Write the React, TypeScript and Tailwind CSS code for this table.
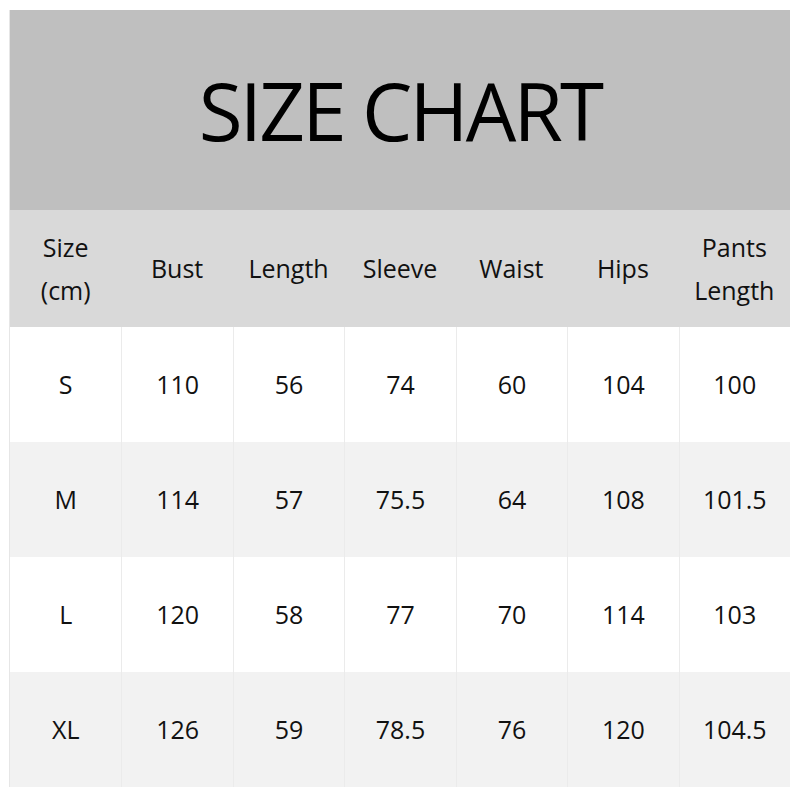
const headers = [
    ["Size", "(cm)"],
    ["Bust"],
    ["Length"],
    ["Sleeve"],
    ["Waist"],
    ["Hips"],
    ["Pants", "Length"],
]

const rows = [
    ["S", "110", "56", "74", "60", "104", "100"],
    ["M", "114", "57", "75.5", "64", "108", "101.5"],
    ["L", "120", "58", "77", "70", "114", "103"],
    ["XL", "126", "59", "78.5", "76", "120", "104.5"],
]

export default function App() {
    return (
        <div className="w-[800px] h-[800px] bg-white pt-[10px] pl-[9px] font-['Open_Sans',sans-serif] text-[#111]">
            <div className="w-[781px] border-l border-[#e6e6e6]">
                <div className="h-[200px] bg-[#bfbfbf] flex items-center justify-center">
                    <h1 className="text-[80px] leading-none tracking-[-2.8px] text-black">SIZE CHART</h1>
                </div>
                <div className="h-[117px] bg-[#d9d9d9] grid grid-cols-7">
                    {headers.map((h) => (
                        <div key={h.join(" ")} className="flex flex-col items-center justify-center text-[25px] leading-[43px]">
                            {h.map((line) => (
                                <span key={line}>{line}</span>
                            ))}
                        </div>
                    ))}
                </div>
                {rows.map((row, i) => (
                    <div key={row[0]} className={`h-[115px] grid grid-cols-7 ${i % 2 === 1 ? "bg-[#f2f2f2]" : "bg-white"}`}>
                        {row.map((cell, j) => (
                            <div
                                key={j}
                                className={`flex items-center justify-center text-[25px] ${j > 0 ? "border-l border-[#ebebeb]" : ""}`}
                            >
                                {cell}
                            </div>
                        ))}
                    </div>
                ))}
            </div>
        </div>
    )
}
